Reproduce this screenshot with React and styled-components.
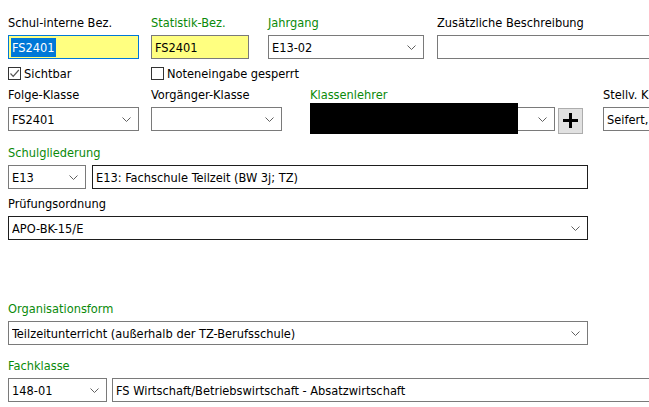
import React from 'react'
import styled, { createGlobalStyle } from 'styled-components'

const Global = createGlobalStyle`
  html, body {
    margin: 0;
    padding: 0;
    background: #ffffff;
    overflow: hidden;
  }
  body {
    font-family: 'DejaVu Sans Condensed', 'DejaVu Sans', sans-serif;
    font-stretch: condensed;
    font-size: 12.7px;
    color: #000;
  }
`

const Page = styled.div`
  width: 649px;
  height: 407px;
  padding: 15px 0 0 8px;
  box-sizing: border-box;
  overflow: hidden;
  display: flex;
  flex-direction: column;
`

const Row = styled.div`
  display: flex;
  align-items: flex-end;
  margin-top: ${(p) => p.$mt || 0}px;
  white-space: nowrap;
`

const Field = styled.div`
  display: flex;
  flex-direction: column;
  width: ${(p) => p.$w}px;
  margin-left: ${(p) => p.$ml || 0}px;
  flex-shrink: 0;
  position: relative;
`

const Label = styled.div`
  height: 16px;
  line-height: 16px;
  margin-bottom: 4px;
  color: ${(p) => (p.$green ? '#0a8a0a' : '#000')};
  white-space: nowrap;
`

const Box = styled.div`
  height: 24px;
  box-sizing: border-box;
  border: 1px solid ${(p) => p.$border || '#7a7a7a'};
  background: ${(p) => p.$bg || '#fff'};
  display: flex;
  align-items: center;
  padding: 0 7px 0 3px;
  overflow: hidden;
  white-space: nowrap;
`

const BoxText = styled.span`
  flex: 1;
  overflow: hidden;
`

const Selected = styled.span`
  background: #0078d7;
  color: #fff;
  padding: 2px 1px;
  margin-left: -1px;
`

const Chevron = () => (
  <svg width="9" height="5" viewBox="0 0 9 5" style={{ flexShrink: 0 }}>
    <path d="M0.5 0.5 L4.5 4.5 L8.5 0.5" fill="none" stroke="#606060" strokeWidth="1" />
  </svg>
)

const Inline = styled.div`
  display: flex;
  align-items: center;
`

const CheckRow = styled.div`
  display: flex;
  align-items: center;
  height: 15px;
  margin-top: 7px;
`

const Check = styled.label`
  display: flex;
  align-items: center;
  gap: 3px;
  width: ${(p) => p.$w}px;
  flex-shrink: 0;
`

const CheckSquare = styled.span`
  width: 13px;
  height: 13px;
  box-sizing: border-box;
  border: 1px solid #333;
  background: #fff;
  display: flex;
  align-items: center;
  justify-content: center;
`

const PlusButton = styled.div`
  width: 25px;
  height: 26px;
  box-sizing: border-box;
  border: 1px solid #adadad;
  background: #e1e1e1;
  display: flex;
  align-items: center;
  justify-content: center;
  margin-left: 3px;
  margin-bottom: -3px;
`

const Redact = styled.div`
  position: absolute;
  left: 0;
  bottom: -3px;
  width: 208px;
  height: 31px;
  background: #000;
`

const Select = ({ children, border, width }) => (
  <Box $border={border} style={width ? { width } : undefined}>
    <BoxText>{children}</BoxText>
    <Chevron />
  </Box>
)

export default function App() {
  return (
    <>
      <Global />
      <Page>
        <Row>
          <Field $w={131}>
            <Label>Schul-interne Bez.</Label>
            <Box $border="#0078d7" $bg="#ffff80">
              <Selected>FS2401</Selected>
            </Box>
          </Field>
          <Field $w={98} $ml={12}>
            <Label $green>Statistik-Bez.</Label>
            <Box $bg="#ffff80">FS2401</Box>
          </Field>
          <Field $w={156} $ml={19}>
            <Label $green>Jahrgang</Label>
            <Select>E13-02</Select>
          </Field>
          <Field $w={230} $ml={13}>
            <Label>Zusätzliche Beschreibung</Label>
            <Box />
          </Field>
        </Row>

        <CheckRow>
          <Check $w={143}>
            <CheckSquare>
              <svg width="11" height="11" viewBox="0 0 11 11">
                <path d="M1.5 5.5 L4.2 8.3 L9.8 2" fill="none" stroke="#555" strokeWidth="1.2" />
              </svg>
            </CheckSquare>
            Sichtbar
          </Check>
          <Check $w={200}>
            <CheckSquare />
            Noteneingabe gesperrt
          </Check>
        </CheckRow>

        <Row $mt={6}>
          <Field $w={131}>
            <Label>Folge-Klasse</Label>
            <Select>FS2401</Select>
          </Field>
          <Field $w={131} $ml={12}>
            <Label>Vorgänger-Klasse</Label>
            <Select />
          </Field>
          <Field $w={273} $ml={28}>
            <Label $green>Klassenlehrer</Label>
            <Inline>
              <Select width="245px" />
              <PlusButton>
                <svg width="17" height="17" viewBox="0 0 17 17">
                  <path d="M8.5 1 V16 M1 8.5 H16" stroke="#000" strokeWidth="3" />
                </svg>
              </PlusButton>
            </Inline>
            <Redact />
          </Field>
          <Field $w={60} $ml={20}>
            <Label>Stellv. Klassenlehrer</Label>
            <Box>Seifert, Anna</Box>
          </Field>
        </Row>

        <Row $mt={14}>
          <Field $w={78}>
            <Label $green>Schulgliederung</Label>
            <Select>E13</Select>
          </Field>
          <Field $w={496} $ml={6}>
            <Box $border="#1e1e1e">E13: Fachschule Teilzeit (BW 3j; TZ)</Box>
          </Field>
        </Row>

        <Row $mt={7}>
          <Field $w={580}>
            <Label>Prüfungsordnung</Label>
            <Select border="#1e1e1e">APO-BK-15/E</Select>
          </Field>
        </Row>

        <Row $mt={61}>
          <Field $w={580}>
            <Label $green>Organisationsform</Label>
            <Select>Teilzeitunterricht (außerhalb der TZ-Berufsschule)</Select>
          </Field>
        </Row>

        <Row $mt={13}>
          <Field $w={99}>
            <Label $green>Fachklasse</Label>
            <Select>148-01</Select>
          </Field>
          <Field $w={560} $ml={5}>
            <Box>FS Wirtschaft/Betriebswirtschaft - Absatzwirtschaft</Box>
          </Field>
        </Row>
      </Page>
    </>
  )
}
